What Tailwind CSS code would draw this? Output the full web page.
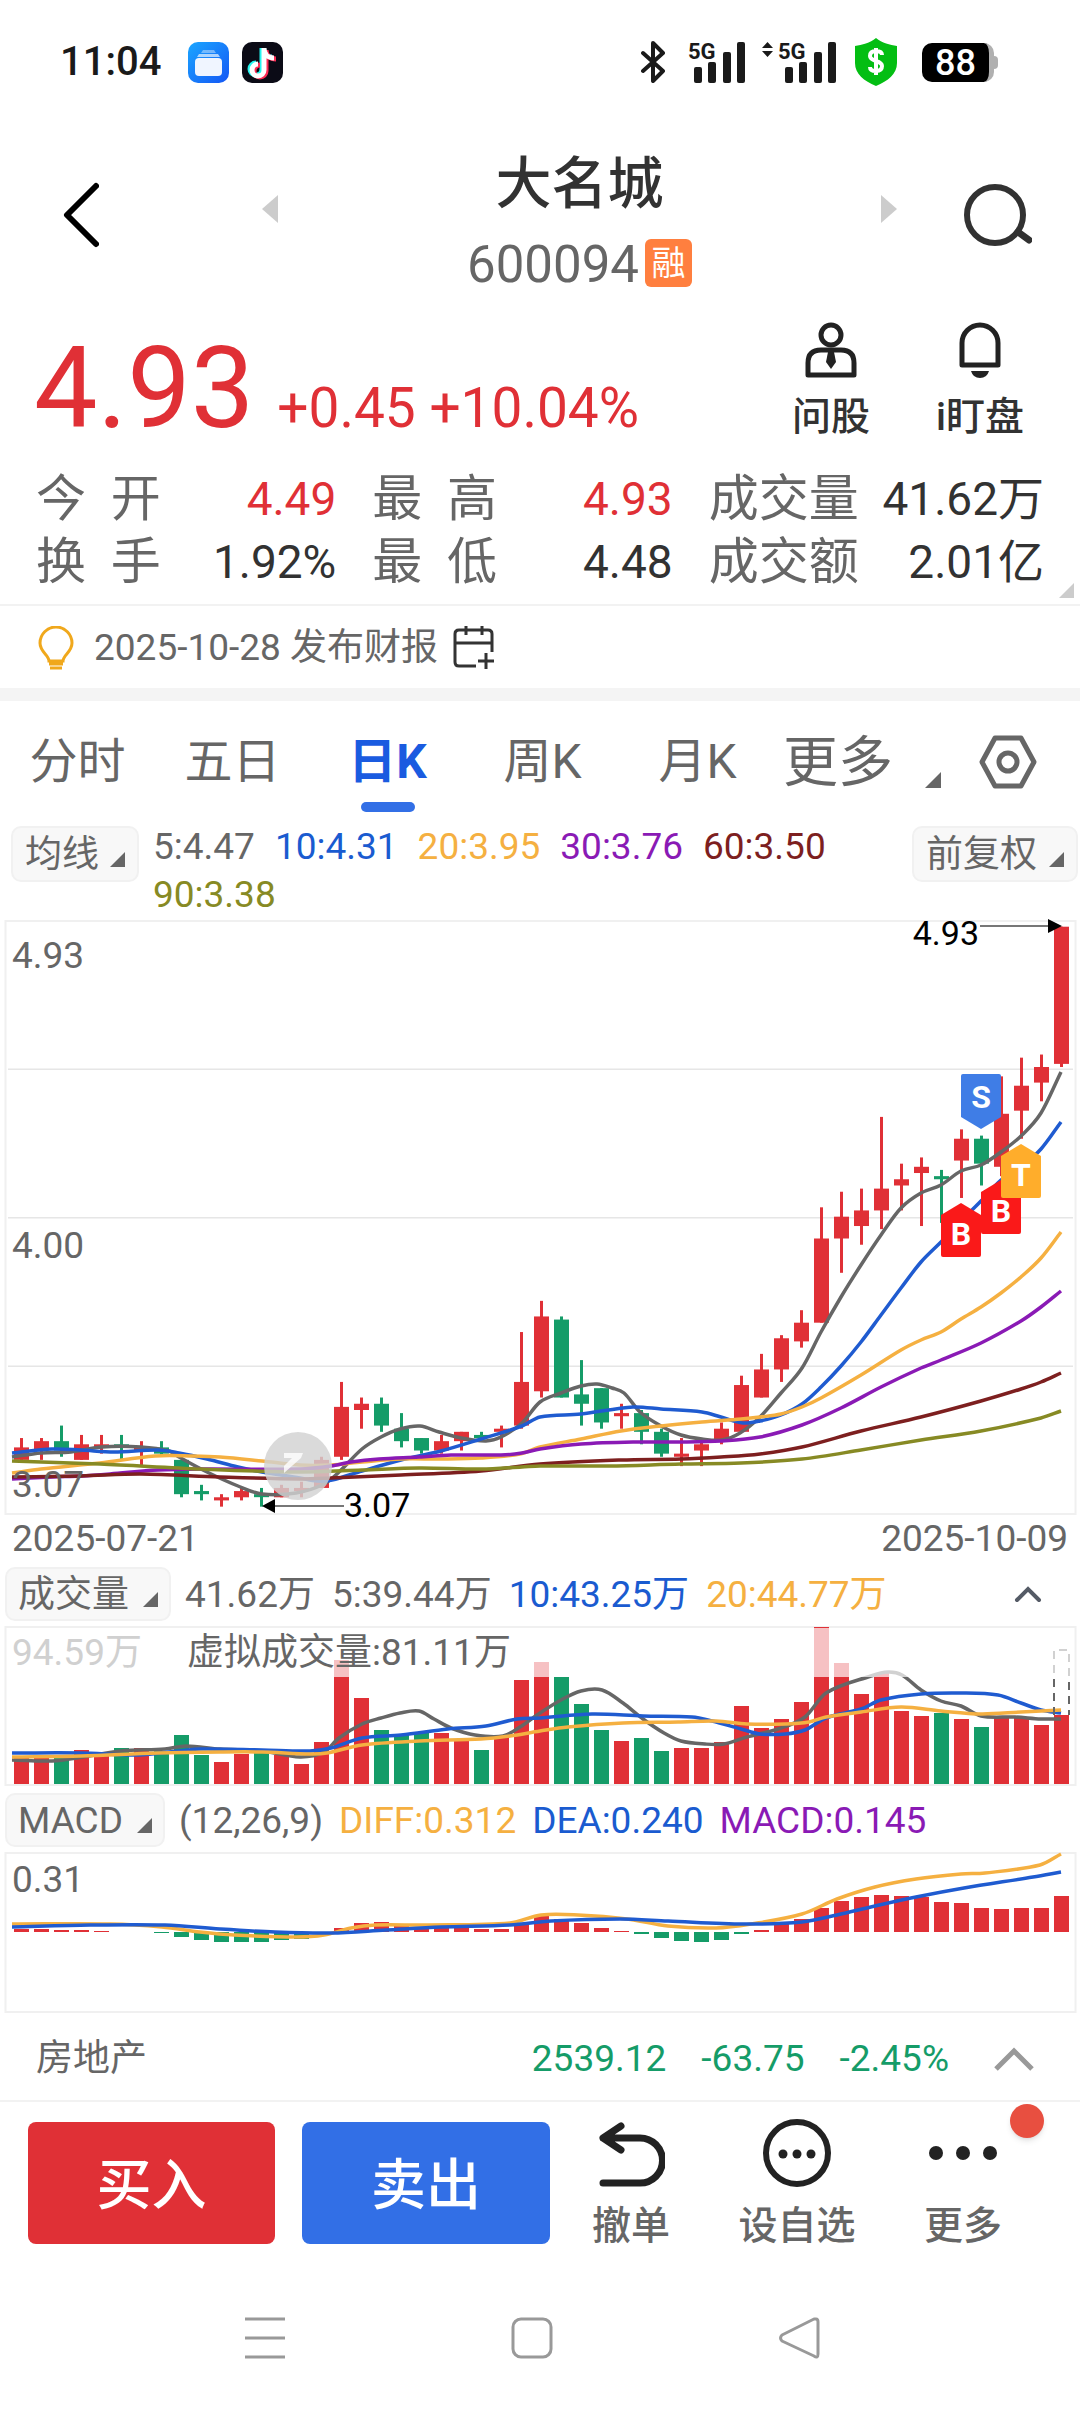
<!DOCTYPE html>
<html lang="zh-CN">
<head>
    <meta charset="UTF-8">
    <meta name="viewport" content="width=device-width, initial-scale=1.0">
    <title>大名城 600094</title>
    <script src="https://cdn.jsdelivr.net/npm/@tailwindcss/browser@4"></script>
</head>
<body class="bg-white text-[#323232] font-[Roboto,'Noto_Sans_CJK_SC',sans-serif]">
    <!-- status bar -->
    <div class="flex items-center justify-between h-[124px] pl-[60px] pr-[82px]">
        <div class="flex items-center">
            <span class="text-[40px] leading-[48px] font-medium text-[#1a1a1a]">11:04</span>
            <svg class="ml-[27px]" width="41" height="41" viewBox="0 0 41 41">
                <defs><linearGradient id="blueApp" x1="0" y1="0" x2="1" y2="1"><stop offset="0" stop-color="#1ba6ff"/><stop offset="1" stop-color="#1457f5"/></linearGradient></defs>
                <rect width="41" height="41" rx="10" fill="url(#blueApp)"/>
                <path d="M15 8h11l2 3H13z" fill="#fff" opacity=".4"/>
                <path d="M11 12h19l2 3H9z" fill="#fff" opacity=".65"/>
                <rect x="7" y="16" width="27" height="18" rx="4" fill="#f0f5ff"/>
            </svg>
            <svg class="ml-[13px]" width="41" height="41" viewBox="0 0 41 41">
                <rect width="41" height="41" rx="10" fill="#0b0b16"/>
                <g fill="none" stroke-width="5">
                    <path d="M20 6v21a6 6 0 1 1-6-6M20 6c0 5 4 9 10 9" stroke="#25f4ee"/>
                    <path d="M24 8v21a6 6 0 1 1-6-6M24 8c0 5 4 9 10 9" stroke="#fe2c55"/>
                    <path d="M22 6v22a6 6 0 1 1-6-6M22 6c0 6 4 10 10 10" stroke="#fff"/>
                </g>
            </svg>
        </div>
        <div class="flex items-center">
            <svg width="25" height="42" viewBox="0 0 25 42" fill="none" stroke="#1a1a1a" stroke-width="4" stroke-linejoin="round" stroke-linecap="round"><path d="M2 12l20 18-10 10V2l10 10L2 30"/></svg>
            <svg class="ml-[22px] overflow-visible" width="60" height="44" viewBox="0 0 60 44" fill="#1a1a1a">
                <text x="0" y="19" font-size="22" font-weight="700">5G</text>
                <rect x="6" y="27" width="8" height="16" rx="2"/><rect x="20" y="22" width="8" height="21" rx="2"/><rect x="35" y="12" width="8" height="31" rx="2"/><rect x="49" y="2" width="8" height="41" rx="2"/>
            </svg>
            <svg class="ml-[14px] overflow-visible" width="75" height="44" viewBox="0 0 75 44" fill="#1a1a1a">
                <path d="M0 8l5.500-6 5.500 6zM0 11l5.500 6 5.500-6z"/>
                <text x="16" y="19" font-size="22" font-weight="700">5G</text>
                <rect x="23" y="27" width="8" height="16" rx="2"/><rect x="37" y="22" width="8" height="21" rx="2"/><rect x="52" y="12" width="8" height="31" rx="2"/><rect x="66" y="2" width="8" height="41" rx="2"/>
            </svg>
            <svg class="ml-[17px]" width="44" height="48" viewBox="0 0 44 48">
                <path d="M22 0C16 5 8 7 1 8v17c0 11 9 18 21 23 12-5 21-12 21-23V8C36 7 28 5 22 0z" fill="#04be13"/>
                <path d="M28 17c0-3-2-4-6-4s-6 2-6 5c0 6 12 4 12 10 0 3-2 5-6 5s-6-1-6-4M22 10v27" fill="none" stroke="#fff" stroke-width="4"/>
            </svg>
            <div class="flex items-center ml-[24px]">
                <div class="w-[72px] h-[39px] rounded-[10px] bg-black border-r-[5px] border-[#b0b0b0] text-white text-[36px] leading-[40px] font-medium text-center">88</div>
                <div class="w-[4px] h-[13px] rounded-r bg-[#b0b0b0]"></div>
            </div>
        </div>
    </div>

    <!-- title -->
    <header class="flex items-center pt-[20px] pl-[63px] pr-[48px]">
        <button class="pb-4" aria-label="返回"><svg width="36" height="66" viewBox="0 0 36 66" fill="none" stroke="#000" stroke-width="6" stroke-linecap="round" stroke-linejoin="round"><path d="M33 4L4 33l29 29"/></svg></button>
        <div class="flex flex-1 items-center justify-between ml-[163px] mr-[67px]">
            <button class="pb-7" aria-label="上一只"><svg width="16" height="28" viewBox="0 0 16 28"><path d="M16 0v28L0 14z" fill="#ccc"/></svg></button>
            <div class="flex flex-col items-center">
                <h1 class="text-[56px] leading-[80px] font-medium">大名城</h1>
                <div class="flex items-center h-[78px]">
                    <span class="pt-[4px] text-[51px] leading-[60px] text-[#666]">600094</span>
                    <span class="ml-[6px] w-[47px] h-[48px] rounded-md bg-[#ff7f3f] text-white text-[34px] leading-[48px] text-center">融</span>
                </div>
            </div>
            <button class="pb-7" aria-label="下一只"><svg width="16" height="28" viewBox="0 0 16 28"><path d="M0 0v28l16-14z" fill="#ccc"/></svg></button>
        </div>
        <button class="pb-4" aria-label="搜索"><svg width="68" height="62" viewBox="0 0 68 62" fill="none" stroke="#323232" stroke-width="6"><circle cx="31" cy="31" r="28"/><path d="M54 48l11 8" stroke-width="7" stroke-linecap="round"/></svg></button>
    </header>

    <!-- quote -->
    <section class="relative">
        <div class="flex justify-between h-[166px] pl-[34px] pr-[56px]">
            <div class="flex items-baseline pt-[31px] text-[#e03036]">
                <span class="text-[113px] leading-[112px]">4.93</span>
                <span class="ml-[23px] text-[55px] leading-[60px]">+0.45 +10.04%</span>
            </div>
            <div class="flex items-start pt-[20px] gap-[66px]">
                <button class="flex flex-col items-center">
                    <svg width="52" height="56" viewBox="0 0 52 56" fill="none" stroke="#222" stroke-width="5"><circle cx="26" cy="13" r="10"/><path d="M3 53V41q0-13 13-13h20q13 0 13 13v12z" stroke-linejoin="round"/><path d="M23 30h6l2 10-5 7-5-7z" fill="#222" stroke="none"/></svg>
                    <span class="mt-[15px] text-[39px] leading-[48px] font-medium">问股</span>
                </button>
                <button class="flex flex-col items-center">
                    <svg width="42" height="56" viewBox="0 0 42 56" fill="none" stroke="#222" stroke-width="5"><path d="M3 43V21a18 18 0 0 1 36 0v22z" stroke-linejoin="round"/><path d="M12 49h18q-2 7-9 7t-9-7z" fill="#222" stroke="none"/></svg>
                    <span class="mt-[15px] text-[39px] leading-[48px] font-medium">i盯盘</span>
                </button>
            </div>
        </div>
        <dl class="grid grid-cols-[300fr_300fr_335fr] gap-x-[36px] px-[36px] pb-[10px] text-[46px] leading-[63px]">
            <div class="flex justify-between"><dt class="text-[50px] text-[#666]">今&nbsp;&nbsp;开</dt><dd class="text-[#e03036]">4.49</dd></div>
            <div class="flex justify-between"><dt class="text-[50px] text-[#666]">最&nbsp;&nbsp;高</dt><dd class="text-[#e03036]">4.93</dd></div>
            <div class="flex justify-between"><dt class="text-[50px] text-[#666]">成交量</dt><dd>41.62万</dd></div>
            <div class="flex justify-between"><dt class="text-[50px] text-[#666]">换&nbsp;&nbsp;手</dt><dd>1.92%</dd></div>
            <div class="flex justify-between"><dt class="text-[50px] text-[#666]">最&nbsp;&nbsp;低</dt><dd>4.48</dd></div>
            <div class="flex justify-between"><dt class="text-[50px] text-[#666]">成交额</dt><dd>2.01亿</dd></div>
        </dl>
        <svg class="absolute right-[6px] bottom-[6px]" width="15" height="15" viewBox="0 0 15 15"><path d="M15 0v15H0z" fill="#ccc"/></svg>
    </section>

    <div class="flex items-center h-[84px] pt-[2px] px-[38px] border-t-2 border-[#f2f2f2] text-[37px] leading-[48px] text-[#666]">
        <svg width="36" height="44" viewBox="0 0 36 44" fill="none" stroke="#f0a81c" stroke-width="3"><path d="M11 35c0-6-9-9-9-18a16 16 0 0 1 32 0c0 9-9 12-9 18zM11 38h14M12 42h12"/></svg>
        <span class="ml-[20px]">2025-10-28 发布财报</span>
        <svg class="ml-[15px]" width="42" height="44" viewBox="0 0 42 44" fill="none" stroke="#333" stroke-width="3"><path d="M23 40H6q-4 0-4-4V8q0-4 4-4h29q4 0 4 4v18M2 17h37M13 0v9M29 0v9M33 27v16M25 35h16"/></svg>
    </div>
    <div class="h-[13px] bg-[#f4f4f4]"></div>

    <!-- period tabs -->
    <nav class="flex items-center h-[122px] pr-[43px] text-[48px] leading-[64px] text-[#666]">
        <button class="w-[155px]">分时</button>
        <button class="w-[155px]">五日</button>
        <button class="relative w-[155px] font-bold text-[#1a5be0]">日K<span class="absolute left-1/2 -translate-x-1/2 -bottom-[18px] w-[54px] h-[10px] rounded-full bg-[#326fe6]"></span></button>
        <button class="w-[155px]">周K</button>
        <button class="w-[155px]">月K</button>
        <button class="flex items-end flex-1 pl-[8px] text-[55px]">更多<svg class="ml-[32px] mb-[6px]" width="16" height="16" viewBox="0 0 16 16"><path d="M16 0v16H0z" fill="#666"/></svg></button>
        <button aria-label="设置"><svg width="58" height="54" viewBox="0 0 58 54" fill="none" stroke="#666" stroke-width="5" stroke-linejoin="round"><path d="M3 27L16 3h26l13 24-13 24H16z"/><circle cx="29" cy="27" r="9"/></svg></button>
    </nav>

    <!-- moving averages -->
    <div class="flex items-start justify-between h-[97px] pt-[3px] pl-[11px] pr-[2px] text-[37px] text-[#666]">
        <button class="flex items-center shrink-0 h-[56px] px-[12px] rounded-[10px] border-2 border-[#f1f1f1] bg-[#f8f8f8] pt-[2px] leading-[50px]">均线<svg class="ml-[11px] mt-[8px]" width="15" height="15" viewBox="0 0 15 15"><path d="M15 0v15H0z" fill="#666"/></svg></button>
        <div class="flex flex-1 flex-wrap gap-x-[20px] ml-[14px] mr-[40px] -mt-[3px] leading-[48px]">
            <span>5:4.47</span>
            <span class="text-[#1a5bd0]">10:4.31</span>
            <span class="text-[#f5b041]">20:3.95</span>
            <span class="text-[#8a1ab5]">30:3.76</span>
            <span class="text-[#7d1f1f]">60:3.50</span>
            <span class="text-[#878a24]">90:3.38</span>
        </div>
        <button class="flex items-center shrink-0 h-[56px] px-[12px] rounded-[10px] border-2 border-[#f1f1f1] bg-[#f8f8f8] pt-[2px] leading-[50px]">前复权<svg class="ml-[12px] mt-[8px]" width="15" height="15" viewBox="0 0 15 15"><path d="M15 0v15H0z" fill="#666"/></svg></button>
    </div>

    <svg id="kline" class="block w-full overflow-visible" viewBox="0 0 1080 596"></svg>
    <div class="flex justify-between px-[12px] text-[37px] leading-[46px] text-[#666]"><span>2025-07-21</span><span>2025-10-09</span></div>

    <!-- volume -->
    <div class="flex items-center h-[64px] pl-[5px] pr-[38px] text-[37px] leading-[50px] text-[#666]">
        <button class="flex items-center h-[54px] px-[11px] rounded-[10px] border-2 border-[#f1f1f1] bg-[#f8f8f8] pt-[2px]">成交量<svg class="ml-[14px] mt-[8px]" width="15" height="15" viewBox="0 0 15 15"><path d="M15 0v15H0z" fill="#666"/></svg></button>
        <div class="flex flex-1 gap-[17px] ml-[14px] pt-[2px]">
            <span>41.62万</span>
            <span>5:39.44万</span>
            <span class="text-[#1a5bd0]">10:43.25万</span>
            <span class="text-[#f5b041]">20:44.77万</span>
        </div>
        <button aria-label="收起"><svg width="28" height="18" viewBox="0 0 28 18" fill="none" stroke="#555b66" stroke-width="4" stroke-linecap="round"><path d="M3 15L14 4l11 11"/></svg></button>
    </div>
    <svg id="volume" class="block w-full" viewBox="0 0 1080 160"></svg>

    <!-- macd -->
    <div class="flex items-center h-[66px] pt-[2px] pl-[5px] text-[37px] leading-[50px] text-[#666]">
        <button class="flex items-center h-[54px] px-[11px] rounded-[10px] border-2 border-[#f1f1f1] bg-[#f8f8f8] pt-[2px]">MACD<svg class="ml-[14px] mt-[8px]" width="15" height="15" viewBox="0 0 15 15"><path d="M15 0v15H0z" fill="#666"/></svg></button>
        <div class="flex gap-[16px] ml-[14px] pt-[2px]">
            <span>(12,26,9)</span>
            <span class="text-[#f5b041]">DIFF:0.312</span>
            <span class="text-[#1a5bd0]">DEA:0.240</span>
            <span class="text-[#8a1ab5]">MACD:0.145</span>
        </div>
    </div>
    <svg id="macd" class="block w-full" viewBox="0 0 1080 162"></svg>

    <!-- sector -->
    <div class="flex items-center h-[88px] pt-[4px] pl-[36px] pr-[44px] border-b-2 border-[#f2f2f2] text-[37px] leading-[48px] text-[#159c68]">
        <span class="flex-1 text-[#666]">房地产</span>
        <div class="flex gap-[35px]"><span>2539.12</span><span>-63.75</span><span>-2.45%</span></div>
        <button class="ml-[43px]" aria-label="展开"><svg width="44" height="28" viewBox="0 0 44 28" fill="none" stroke="#999" stroke-width="5"><path d="M4 24L22 6l18 18"/></svg></button>
    </div>

    <!-- trade bar -->
    <footer class="flex items-start h-[166px] pt-[20px] pl-[28px] pr-[60px]">
        <button class="w-[247px] h-[122px] pt-[4px] rounded-lg bg-[#e03036] text-white text-[55px] font-medium">买入</button>
        <button class="w-[248px] h-[122px] pt-[4px] ml-[27px] rounded-lg bg-[#326fe6] text-white text-[55px] font-medium">卖出</button>
        <div class="flex flex-1 justify-between ml-[42px] -mt-[4px] text-[39px] leading-[48px] font-medium text-[#666]">
            <button class="flex flex-col items-center">
                <svg width="68" height="70" viewBox="0 0 68 70" fill="none" stroke="#222" stroke-width="7" stroke-linecap="round" stroke-linejoin="round"><path d="M24 8L6 20l18 12M6 20h37a22 22 0 0 1 0 45H6"/></svg>
                <span class="mt-[14px]">撤单</span>
            </button>
            <button class="flex flex-col items-center">
                <svg width="70" height="70" viewBox="0 0 70 70"><circle cx="35" cy="35" r="31" fill="none" stroke="#222" stroke-width="6"/><g fill="#222"><circle cx="21" cy="36" r="4.500"/><circle cx="35" cy="36" r="4.500"/><circle cx="49" cy="36" r="4.500"/></g></svg>
                <span class="mt-[14px]">设自选</span>
            </button>
            <button class="relative flex flex-col items-center mr-[18px]">
                <svg width="70" height="70" viewBox="0 0 70 70" fill="#222"><circle cx="8" cy="35" r="7"/><circle cx="35" cy="35" r="7"/><circle cx="62" cy="35" r="7"/></svg>
                <span class="mt-[14px]">更多</span>
                <span class="absolute -top-[14px] -right-[42px] size-[34px] rounded-full bg-[#e84f40] shadow-md"></span>
            </button>
        </div>
    </footer>

    <!-- system nav -->
    <div class="flex justify-between h-[143px] pt-[46px] pl-[244px] pr-[260px]">
        <button class="self-start" aria-label="任务"><svg width="42" height="48" viewBox="0 0 42 48" stroke="#999" stroke-width="3"><path d="M1 5h40M1 24h40M1 43h40"/></svg></button>
        <button class="self-start" aria-label="主页"><svg width="42" height="48" viewBox="0 0 42 48" fill="none" stroke="#999" stroke-width="3"><rect x="2" y="5" width="38" height="38" rx="8"/></svg></button>
        <button class="self-start" aria-label="返回"><svg width="42" height="48" viewBox="0 0 42 48" fill="none" stroke="#999" stroke-width="3" stroke-linejoin="round"><path d="M38 5q2 0 2 3v32q0 5-4 2L4 27q-3-3 0-6L36 5z"/></svg></button>
    </div>

    <script>
        const RED = "#e03036", GREEN = "#159c68", GRAY = "#666", BLUE = "#1f5bd0", ORANGE = "#f5b041", PURPLE = "#8a1ab5";
        // colour, high, body top, body bottom, low (in 0.01 yuan)
        const candles = `R 329 326 322 322|R 329 328 325 322|G 333 328 325 323|R 330 327 322 322|R 330 327 326 324|G 330 327 326 322|R 328 326 326 320|G 328 326 324 323|G 322 322 311 310|G 314 312 311 309|R 311 310 309 307|R 313 312 310 309|G 313 311 311 307|R 314 313 310 310|R 315 313 312 310|R 323 322 313 313|R 347 339 323 322|R 342 340 338 332|G 342 340 333 331|G 337 332 328 326|G 329 329 325 324|R 330 328 325 324|R 331 331 328 325|G 331 330 329 328|R 333 332 331 326|R 363 347 333 332|R 373 368 344 342|G 368 367 342 342|G 354 343 340 333|G 345 345 334 332|R 340 337 336 332|G 338 337 331 327|G 332 331 324 323|R 329 324 323 320|R 328 327 325 320|R 334 332 328 327|R 349 346 331 331|R 356 351 342 342|R 362 361 351 347|R 370 366 360 358|R 403 393 366 366|R 408 400 393 382|R 409 402 397 391|R 432 409 402 396|R 417 412 410 402|R 419 416 414 397|G 415 413 412 398|R 428 425 418 406|G 426 425 417 410|R 445 433 416 413|R 451 442 434 425|R 452 448 443 437|R 493 493 449 448`
            .split("|").map(row => row.split(" "));
        const volumes = [27,27,27,34,29,36,36,33,49,29,22,30,33,29,20,42,124,86,54,50,52,51,44,34,49,104,122,107,80,54,43,46,33,36,36,42,78,56,65,82,157,121,90,111,73,68,71,65,57,66,66,59,69];
        const macd = [3,3,2,2,1,0,0,-1,-5,-8,-10,-10,-10,-8,-7,0,4,9,10,7,5,4,4,3,3,7,17,13,9,4,1,-2,-6,-9,-10,-8,-2,2,8,13,24,31,35,37,36,35,30,29,24,23,24,24,36];

        const barX = i => 14 + i * 20;
        const priceY = p => 6.7 + (493 - p) * 3.118;

        function rect(x, y, w, h, fill) {
            return `<rect x="${x}" y="${y}" width="${w}" height="${h}" fill="${fill}"/>`;
        }

        // smooth curve through "x,y" points
        function curve(color, points) {
            const p = points.split(" ").map(s => s.split(",").map(Number));
            let d = `M${p[0]}`;
            for (let i = 0; i < p.length - 1; i++) {
                const a = p[i - 1] || p[i], b = p[i], c = p[i + 1], e = p[i + 2] || c;
                const k = (c[0] - b[0]) / 3;
                const m1 = (c[1] - a[1]) / (c[0] - a[0]);
                const m2 = (e[1] - b[1]) / (e[0] - b[0]);
                d += `C${b[0] + k},${b[1] + m1 * k} ${c[0] - k},${c[1] - m2 * k} ${c}`;
            }
            return `<path d="${d}" fill="none" stroke="${color}" stroke-width="3.5"/>`;
        }

        function label(x, y, text, fill = GRAY, size = 37, anchor = "start") {
            return `<text x="${x}" y="${y}" font-size="${size}" fill="${fill}" text-anchor="${anchor}">${text}</text>`;
        }

        function tag(cx, y, letter, fill, down) {
            const shape = down ? `M${cx - 20} ${y + 2}q0-2 2-2h36q2 0 2 2v41l-20 12-20-12z` : `M${cx} ${y}l20 12v40q0 2-2 2h-36q-2 0-2-2v-40z`;
            return `<path d="${shape}" fill="${fill}"/><text x="${cx}" y="${y + (down ? 34 : 42)}" font-size="32" font-weight="700" fill="#fff" text-anchor="middle">${letter}</text>`;
        }

        function frame(h) {
            return `<rect x="5.500" y="1" width="1070" height="${h}" fill="none" stroke="#f0f0f0" stroke-width="2"/>`;
        }

        // k-line
        let k = frame(593);
        for (const y of [148.5, 297, 445.5]) k += rect(8, y, 1065, 1.5, "#e6e6e6");
        candles.forEach(([c, high, top, bottom, low], i) => {
            const fill = c === "R" ? RED : GREEN, y = priceY(top);
            k += rect(barX(i) + 6, priceY(high), 3, priceY(low) - priceY(high), fill);
            k += rect(barX(i), y, 15, Math.max(priceY(bottom) - y, 3), fill);
        });
        k += curve(GRAY, "12,537 41,533 71,532 102,527 141,527 169,531 179,537 207,552 238,566 262,574 296,573 324,564 339,552 362,529 381,517 400,509 420,506 439,512 461,518 486,521 501,517 522,503 540,482 561,473 581,466 597,464 612,468 624,473 640,492 661,506 681,515 702,519 722,520 740,513 760,497 781,473 802,448 821,412 841,377 861,345 881,315 901,288 921,273 941,265 961,251 981,245 1001,232 1021,216 1041,193 1061,152");
        k += curve(BLUE, "12,533 52,529 81,530 114,532 158,530 179,533 207,539 238,547 262,552 300,558 317,561 332,560 362,551 401,540 441,531 481,519 522,506 540,497 581,494 633,487 661,489 702,492 721,497 743,503 760,501 781,495 802,484 821,467 841,446 861,422 881,395 901,368 921,342 941,322 970,292 981,281 1001,260 1021,247 1041,229 1061,202");
        k += curve(ORANGE, "12,553 41,549 100,543 155,536 193,536 220,537 262,541 300,545 331,545 362,542 401,539 441,539 481,538 520,534 540,527 581,519 621,511 661,506 702,502 741,499 760,497 781,494 802,487 821,478 861,455 901,430 921,420 941,412 961,399 981,387 1001,373 1021,357 1041,338 1061,312");
        k += curve(PURPLE, "12,559 52,557 81,556 110,554 158,550 201,549 300,549 331,546 351,542 379,539 419,537 451,535 501,535 522,533 540,529 581,524 633,522 681,522 721,521 760,517 802,505 841,488 881,467 921,448 941,440 981,423 1021,401 1041,387 1061,371");
        k += curve("#7d1f1f", "12,557 81,556 141,554 220,557 300,559 331,558 401,555 481,551 540,544 621,540 681,539 721,537 760,534 802,527 861,511 921,497 981,481 1021,469 1041,462 1061,453");
        k += curve("#878a24", "12,541 100,544 201,549 300,552 362,550 419,548 481,549 522,547 540,546 609,546 681,544 741,543 802,539 861,530 921,520 981,511 1041,498 1061,491");
        k += `<circle cx="298" cy="546" r="34" fill="#d2d2d2" opacity=".82"/><path d="M284 533h19l-2 5-17 15v-7l8-8h-8z" fill="#fff" opacity=".8"/>`;
        k += label(12, 48, "4.93") + label(12, 338, "4.00") + label(12, 577, "3.07");
        k += `<path d="M980 6h68M275 586h69" stroke="#777" stroke-width="2"/><path d="M1048 -1v14l14-7zM275 579v14l-13-7z"/>`;
        k += label(979, 25, "4.93", "#000", 34, "end") + label(344, 597, "3.07", "#000", 34);
        k += tag(981, 154, "S", "#3f7de6", true) + tag(961, 283, "B", "#fa1919") + tag(1001, 260, "B", "#fa1919") + tag(1021, 224, "T", "#ffad2b");
        document.getElementById("kline").innerHTML = k;

        // volume
        let v = frame(158);
        volumes.forEach((h, i) => v += rect(barX(i), 158 - h, 15, h, candles[i][0] === "R" ? RED : GREEN));
        v += curve(GRAY, "12,134 52,135 83,131 121,125 165,123 186,120 220,123 262,125 300,131 324,126 339,112 362,98 381,92 400,87 419,85 434,93 451,102 475,109 503,110 520,101 540,87 561,74 581,65 602,64 623,77 643,93 664,107 681,115 705,118 724,118 747,111 778,103 805,91 826,67 871,50 888,46 902,49 921,64 941,75 961,80 981,90 1015,91 1041,93 1061,93");
        v += curve(BLUE, "12,127 81,127 138,129 179,125 201,123 262,124 310,125 331,122 362,112 401,109 448,103 486,100 517,93 540,92 592,88 643,90 692,91 712,95 741,103 760,108 785,108 805,104 826,92 861,83 881,74 921,68 961,67 998,69 1021,77 1041,84 1061,87");
        v += curve(ORANGE, "12,131 81,130 158,127 220,126 262,126 310,128 327,127 362,119 419,115 481,113 510,110 540,105 568,101 623,97 678,96 716,95 747,98 785,98 809,96 826,91 861,86 901,81 941,85 981,88 1021,86 1061,84");
        v += `<path d="M1054 89V24h15v65" fill="none" stroke="#666" stroke-width="2" stroke-dasharray="8 6"/>`;
        v += `<rect x="7" y="2" width="1067" height="49" fill="#fff" opacity=".7"/>`;
        v += label(12, 39, "94.59万", "#d0d0d0") + label(187, 39, "虚拟成交量:81.11万");
        document.getElementById("volume").innerHTML = v;

        // macd
        let m = frame(159);
        macd.forEach((h, i) => m += rect(barX(i), Math.min(80, 80 - h), 15, Math.abs(h), h > 0 ? RED : GREEN));
        m += curve(ORANGE, "12,72 110,72 162,75 200,80 234,83 296,85 324,83 351,76 375,73 427,73 510,71 541,63 578,63 627,67 668,74 716,76 751,72 802,62 837,47 875,35 916,27 961,22 985,21 1040,13 1061,2");
        m += curve(BLUE, "12,75 90,73 165,73 220,77 275,80 331,81 386,78 441,75 510,73 551,69 620,67 668,69 744,72 802,70 837,63 875,54 916,45 964,36 1033,25 1061,20");
        m += label(12, 40, "0.31");
        document.getElementById("macd").innerHTML = m;
    </script>
</body>
</html>
